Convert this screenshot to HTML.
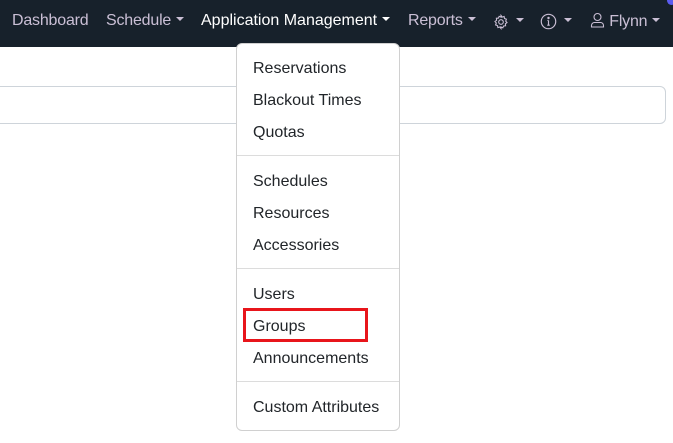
<!DOCTYPE html>
<html><head><meta charset="utf-8"><style>
*{margin:0;padding:0;box-sizing:border-box}
body{width:673px;height:443px;overflow:hidden;background:#fff;font-family:"Liberation Sans",Arial,sans-serif;position:relative}
.nav{position:absolute;left:0;top:0;width:673px;height:47px;background:#17212b}
.n{position:absolute;top:12px;font-size:16px;color:#cabfd5;white-space:nowrap;letter-spacing:-0.2px}
.w{color:#fff}
.car{display:inline-block;width:0;height:0;border-left:4px solid transparent;border-right:4px solid transparent;border-top:4px solid currentColor;vertical-align:middle;margin-left:5px;margin-top:-3px}
.inp{position:absolute;left:-10px;top:86px;width:676px;height:38px;border:1px solid #ced4da;border-radius:6px}
.dd{position:absolute;left:236px;top:43px;width:164px;height:388px;background:#fff;border:1px solid #d0d0d0;border-radius:6px}
.it{position:absolute;left:16px;font-size:16px;color:#212529;white-space:nowrap}
.hr{position:absolute;left:0;width:162px;border-top:1px solid #dcdcdc}
.red{position:absolute;left:243px;top:308px;width:125px;height:34px;border:3px solid #e8151b}
</style></head><body>
<div class="nav">
<div class="n" style="left:12px">Dashboard</div>
<div class="n" style="left:106px">Schedule<span class="car"></span></div>
<div class="n w" style="left:201px;letter-spacing:0">Application Management<span class="car"></span></div>
<div class="n" style="left:408px">Reports<span class="car"></span></div>
<div class="n" style="left:493px;top:13px"><svg width="16" height="16" viewBox="0 0 16 16" fill="none" stroke="#cabfd5" stroke-width="1.1" style="vertical-align:middle"><circle cx="8" cy="8" r="2.3"/><path d="M8 1.5l1.2 1.6 1.9-.6.4 2 1.9.7-.7 1.9 1.3 1.5-1.6 1.2.2 2-2 .2-.8 1.8-1.8-.8L8 14.5 6.8 13l-1.9.6-.4-2-1.9-.7.7-1.9L2 7.5l1.6-1.2-.2-2 2-.2.8-1.8 1.8.8z"/></svg><span class="car" style="margin-left:7px"></span></div>
<div class="n" style="left:540px;top:13px"><svg width="17" height="17" viewBox="0 0 16 16" fill="none" stroke="#cabfd5" stroke-width="1.1" style="vertical-align:middle"><circle cx="8" cy="8" r="6.8"/><path d="M8 7v4.5M6.8 11.5h2.4M7 7h1" /><circle cx="8" cy="4.7" r=".6" fill="#cabfd5"/></svg><span class="car" style="margin-left:7px"></span></div>
<div class="n" style="left:590px"><svg width="15" height="16" viewBox="0 0 15 16" fill="none" stroke="#cabfd5" stroke-width="1.1" style="vertical-align:-2px"><circle cx="7.5" cy="5" r="3.5"/><path d="M1.5 15v-1.5a3 3 0 0 1 3-3h6a3 3 0 0 1 3 3V15z"/></svg>&nbsp;Flynn<span class="car"></span></div>
<div style="position:absolute;left:667px;top:-4px;width:9px;height:9px;border-radius:50%;background:#5b5cf0"></div>
</div>
<div class="inp"></div>
<div class="dd">
<div class="it" style="top:16px">Reservations</div>
<div class="it" style="top:48px">Blackout Times</div>
<div class="it" style="top:80px">Quotas</div>
<div class="hr" style="top:111px"></div>
<div class="it" style="top:129px">Schedules</div>
<div class="it" style="top:161px">Resources</div>
<div class="it" style="top:193px">Accessories</div>
<div class="hr" style="top:224px"></div>
<div class="it" style="top:242px">Users</div>
<div class="it" style="top:274px">Groups</div>
<div class="it" style="top:306px">Announcements</div>
<div class="hr" style="top:337px"></div>
<div class="it" style="top:355px">Custom Attributes</div>
</div>
<div class="red"></div>
</body></html>
